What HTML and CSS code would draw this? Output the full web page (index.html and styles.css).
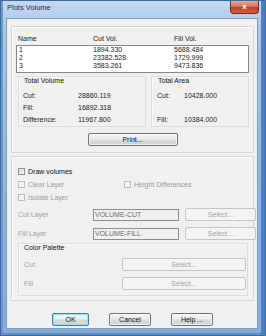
FILE: index.html
```html
<!DOCTYPE html>
<html lang="en">
<head>
    <meta charset="UTF-8">
    <title>Plots Volume</title>
    <link rel="stylesheet" href="styles.css">
</head>
<body>
    <div class="window">
        <div class="titlebar">
            <span class="title">Plots Volume</span>
            <div class="close">x</div>
        </div>

        <div class="client">
            <div class="panel results">
                <div class="list-head">
                    <span>Name</span><span>Cut Vol.</span><span>Fill Vol.</span>
                </div>
                <div class="listbox">
                    <div class="list-row"><span>1</span><span>1894.330</span><span>5688.484</span></div>
                    <div class="list-row"><span>2</span><span>23382.528</span><span>1729.999</span></div>
                    <div class="list-row"><span>3</span><span>3583.261</span><span>9473.836</span></div>
                </div>

                <div class="totals">
                    <div class="group vol">
                        <div class="group-title">Total Volume</div>
                        <div class="pairs">
                            <span>Cut:</span><span>28860.119</span>
                            <span>Fill:</span><span>16892.318</span>
                            <span>Difference:</span><span>11967.800</span>
                        </div>
                    </div>
                    <div class="group area">
                        <div class="group-title">Total Area</div>
                        <div class="pairs">
                            <span>Cut:</span><span>10428.000</span>
                            <span></span><span></span>
                            <span>Fill:</span><span>10384.000</span>
                        </div>
                    </div>
                </div>

                <div class="print-row">
                    <button class="btn print">Print...</button>
                </div>
            </div>

            <div class="panel options">
                <div class="check-row">
                    <label class="check"><span class="box"></span>Draw volumes</label>
                </div>
                <div class="check-row two">
                    <label class="check disabled"><span class="box"></span>Clear Layer</label>
                    <label class="check disabled"><span class="box"></span>Height Differences</label>
                </div>
                <div class="check-row">
                    <label class="check disabled"><span class="box"></span>Isolate Layer</label>
                </div>

                <div class="layer-row">
                    <span class="muted">Cut Layer</span>
                    <div class="textbox">VOLUME-CUT</div>
                    <button class="btn disabled">Select...</button>
                </div>
                <div class="layer-row">
                    <span class="muted">Fill Layer</span>
                    <div class="textbox">VOLUME-FILL</div>
                    <button class="btn disabled">Select...</button>
                </div>

                <div class="group palette">
                    <div class="group-title">Color Palette</div>
                    <div class="palette-row">
                        <span class="muted">Cut</span>
                        <button class="btn disabled">Select...</button>
                    </div>
                    <div class="palette-row">
                        <span class="muted">Fill</span>
                        <button class="btn disabled">Select...</button>
                    </div>
                </div>
            </div>

            <div class="actions">
                <button class="btn default ok">OK</button>
                <button class="btn cancel">Cancel</button>
                <button class="btn help">Help ...</button>
            </div>
        </div>
    </div>
</body>
</html>
```

FILE: styles.css
```css
* {
    box-sizing: border-box;
}

body {
    margin: 0;
    font-family: "Liberation Sans", Arial, sans-serif;
    font-size: 7px;
    line-height: 8px;
    color: #1a1a1a;
}

.window {
    width: 266px;
    height: 336px;
    padding: 0 7px 7px 5px;
    background: linear-gradient(180deg, #c6daf0 0%, #aac6e6 8%, #8fb3dd 60%, #86acd9 100%);
    border: 1px solid #3d6a9e;
    box-shadow: inset 2px 0 #6a98cc, inset -4px 0 #4a80c2, inset 0 -2px #5f8fc6;
}

.titlebar {
    height: 17px;
    display: flex;
    justify-content: space-between;
    align-items: flex-start;
    padding-left: 1px;
}

.title {
    margin-top: 3px;
    font-size: 7.5px;
    color: #1c2a3e;
}

.close {
    width: 29px;
    height: 13px;
    margin-right: -1px;
    border: 1px solid #6d2a22;
    border-top: none;
    border-radius: 0 0 4px 4px;
    background: linear-gradient(180deg, #e9a99b 0%, #d7735f 45%, #c2402b 55%, #d2604a 100%);
    color: #fff;
    font-weight: bold;
    font-size: 8px;
    line-height: 11px;
    text-align: center;
}

.client {
    height: 311px;
    border: 1px solid #7b9bc0;
    background-color: #f0f0f0;
    padding: 7px 3px 0 4px;
}

.panel {
    border: 1px solid #d6d6d6;
    box-shadow: inset 1px 1px #fbfbfb;
}

.results {
    padding: 8px 4px 6px 4px;
}

.list-head {
    display: grid;
    grid-template-columns: 75px 81px 1fr;
    height: 8px;
    padding-left: 2px;
}

.listbox {
    margin-top: 2px;
    border: 1px solid #828790;
    background-color: #fff;
    padding-bottom: 2px;
}

.list-row {
    display: grid;
    grid-template-columns: 74px 81px 1fr;
    padding-left: 2px;
    height: 8px;
}

.totals {
    display: flex;
    gap: 5px;
    margin-top: 3px;
    padding-left: 2px;
}

.group {
    border: 1px solid #dcdcdc;
    box-shadow: inset 1px 1px #fafafa;
}

.group-title {
    height: 8px;
    color: #111;
}

.totals .group {
    height: 51px;
    padding: 0 4px 2px 4px;
}

.vol {
    width: 128px;
}

.vol .group-title {
    padding-left: 1px;
}

.area {
    width: 98px;
    padding-left: 5px !important;
}

.area .group-title {
    padding-left: 1px;
}

.pairs {
    display: grid;
    grid-auto-rows: 8px;
    row-gap: 4px;
    margin-top: 7px;
}

.vol .pairs {
    grid-template-columns: 55px 1fr;
}

.area .pairs {
    grid-template-columns: 27px 1fr;
}

.print-row {
    display: flex;
    justify-content: center;
    margin-top: 6px;
}

.btn {
    height: 13px;
    padding: 0;
    font-family: inherit;
    font-size: 7px;
    line-height: 11px;
    color: #111;
    border: 1px solid #707070;
    border-radius: 2px;
    background: linear-gradient(180deg, #f4f4f4 0%, #ececec 48%, #dcdcdc 52%, #d0d0d0 100%);
    box-shadow: inset 0 0 0 1px rgba(255, 255, 255, 0.7);
}

.print {
    width: 90px;
}

.btn.disabled {
    color: #a3a3a3;
    border-color: #c2c5c8;
    background: #f4f4f4;
    box-shadow: none;
}

.options {
    margin-top: 3px;
    padding: 8px 5px 4px 6px;
}

.check-row {
    height: 13px;
    display: flex;
    align-items: center;
}

.check-row.two {
    display: grid;
    grid-template-columns: 106px 1fr;
    align-items: center;
}

.check {
    display: flex;
    align-items: center;
    gap: 3px;
    color: #111;
}

.box {
    width: 7px;
    height: 7px;
    border: 1px solid #8e8f8f;
    background: linear-gradient(135deg, #d9d9d9 0%, #f6f6f6 100%);
}

.check.disabled {
    color: #9c9c9c;
}

.check.disabled .box {
    border-color: #bcbcbc;
    background: #f4f4f4;
}

.muted {
    color: #a0a0a0;
}

.layer-row {
    display: grid;
    grid-template-columns: 69px 86px 71px;
    column-gap: 6px;
    align-items: center;
    height: 13px;
    margin-top: 4px;
}

.layer-row + .layer-row {
    margin-top: 6px;
}

.textbox {
    height: 12px;
    margin-top: 1px;
    border: 1px solid #8d8d8d;
    background-color: #f0f0f0;
    color: #6a6a6a;
    padding-left: 1px;
    line-height: 10px;
}

.layer-row .btn {
    width: 71px;
}

.palette {
    margin-top: 3px;
    padding: 0 4px 5px 5px;
}

.palette-row {
    display: grid;
    grid-template-columns: 98px 124px;
    align-items: center;
    height: 13px;
    margin-top: 6px;
}

.palette-row .btn {
    width: 124px;
}

.actions {
    display: flex;
    justify-content: center;
    gap: 20px;
    margin-top: 12px;
}

.ok {
    width: 37px;
}

.cancel,
.help {
    width: 42px;
}

.btn.default {
    border-color: #3c7fb1;
    box-shadow: inset 0 0 0 1px #9fdcf5;
}
```
